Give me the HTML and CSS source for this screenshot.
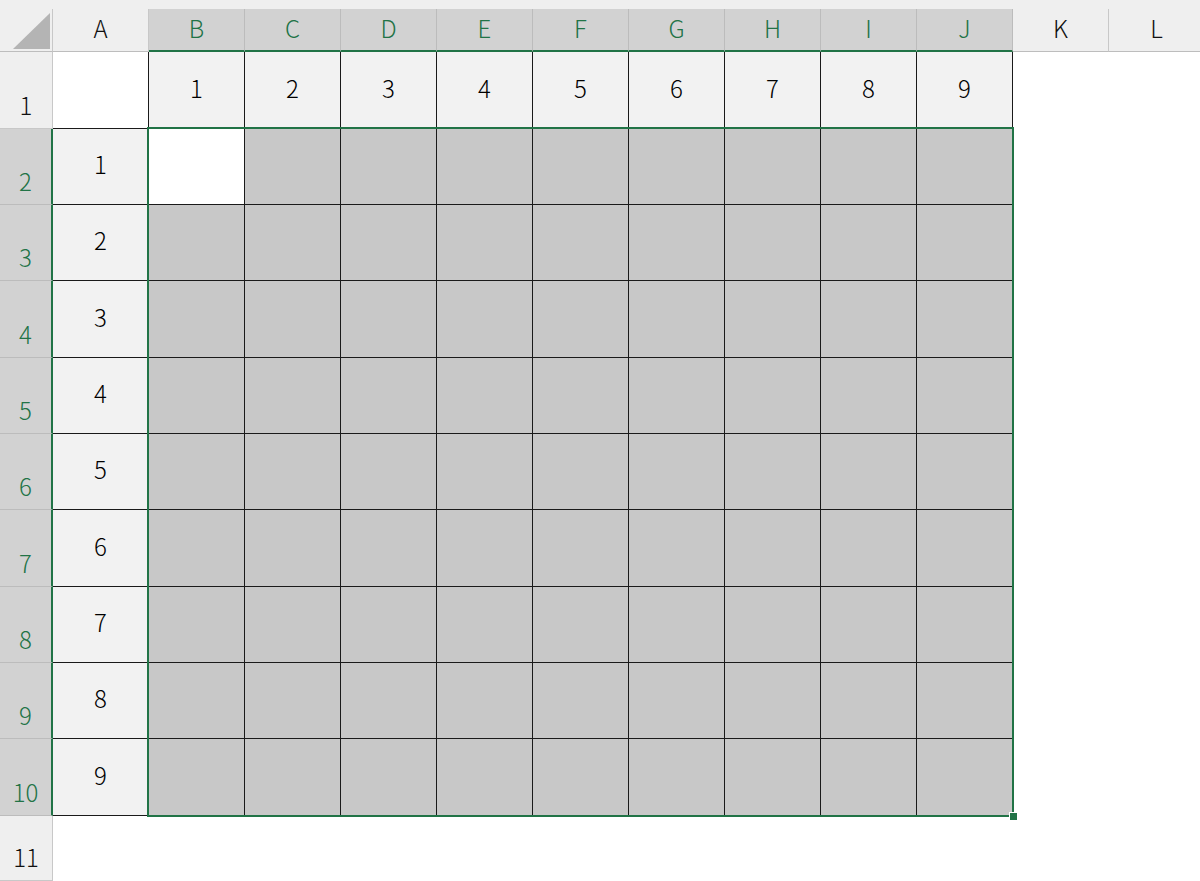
FILE: index.html
```html
<!DOCTYPE html>
<html lang="ja">
<head>
<meta charset="utf-8">
<title>Sheet</title>
<link rel="stylesheet" href="styles.css">
</head>
<body>
<div class="sheet">
  <div class="strip"></div>

  <div class="corner"><svg class="tri" width="52" height="43" viewBox="0 0 52 43"><polygon points="13,40 50,40 50,4" fill="#b4b4b4"/></svg></div>
  <div class="ch">A</div>
  <div class="ch sel">B</div>
  <div class="ch sel">C</div>
  <div class="ch sel">D</div>
  <div class="ch sel">E</div>
  <div class="ch sel">F</div>
  <div class="ch sel">G</div>
  <div class="ch sel">H</div>
  <div class="ch sel">I</div>
  <div class="ch sel">J</div>
  <div class="ch">K</div>
  <div class="ch">L</div>

  <div class="rh">1</div>
  <div class="cell blank"></div>
  <div class="cell light">1</div>
  <div class="cell light">2</div>
  <div class="cell light">3</div>
  <div class="cell light">4</div>
  <div class="cell light">5</div>
  <div class="cell light">6</div>
  <div class="cell light">7</div>
  <div class="cell light">8</div>
  <div class="cell light">9</div>
  <div class="empty"></div>
  <div class="empty"></div>

  <div class="range">
    <div class="rc active"></div><div class="rc"></div><div class="rc"></div><div class="rc"></div><div class="rc"></div><div class="rc"></div><div class="rc"></div><div class="rc"></div><div class="rc"></div>
    <div class="rc"></div><div class="rc"></div><div class="rc"></div><div class="rc"></div><div class="rc"></div><div class="rc"></div><div class="rc"></div><div class="rc"></div><div class="rc"></div>
    <div class="rc"></div><div class="rc"></div><div class="rc"></div><div class="rc"></div><div class="rc"></div><div class="rc"></div><div class="rc"></div><div class="rc"></div><div class="rc"></div>
    <div class="rc"></div><div class="rc"></div><div class="rc"></div><div class="rc"></div><div class="rc"></div><div class="rc"></div><div class="rc"></div><div class="rc"></div><div class="rc"></div>
    <div class="rc"></div><div class="rc"></div><div class="rc"></div><div class="rc"></div><div class="rc"></div><div class="rc"></div><div class="rc"></div><div class="rc"></div><div class="rc"></div>
    <div class="rc"></div><div class="rc"></div><div class="rc"></div><div class="rc"></div><div class="rc"></div><div class="rc"></div><div class="rc"></div><div class="rc"></div><div class="rc"></div>
    <div class="rc"></div><div class="rc"></div><div class="rc"></div><div class="rc"></div><div class="rc"></div><div class="rc"></div><div class="rc"></div><div class="rc"></div><div class="rc"></div>
    <div class="rc"></div><div class="rc"></div><div class="rc"></div><div class="rc"></div><div class="rc"></div><div class="rc"></div><div class="rc"></div><div class="rc"></div><div class="rc"></div>
    <div class="rc"></div><div class="rc"></div><div class="rc"></div><div class="rc"></div><div class="rc"></div><div class="rc"></div><div class="rc"></div><div class="rc"></div><div class="rc"></div>
    <span class="handle"></span>
  </div>

  <div class="rh sel">2</div><div class="cell light">1</div><div class="empty"></div><div class="empty"></div>
  <div class="rh sel">3</div><div class="cell light">2</div><div class="empty"></div><div class="empty"></div>
  <div class="rh sel">4</div><div class="cell light">3</div><div class="empty"></div><div class="empty"></div>
  <div class="rh sel">5</div><div class="cell light">4</div><div class="empty"></div><div class="empty"></div>
  <div class="rh sel">6</div><div class="cell light">5</div><div class="empty"></div><div class="empty"></div>
  <div class="rh sel">7</div><div class="cell light">6</div><div class="empty"></div><div class="empty"></div>
  <div class="rh sel">8</div><div class="cell light">7</div><div class="empty"></div><div class="empty"></div>
  <div class="rh sel">9</div><div class="cell light">8</div><div class="empty"></div><div class="empty"></div>
  <div class="rh sel">10</div><div class="cell light">9</div><div class="empty"></div><div class="empty"></div>

  <div class="rh">11</div>
</div>
</body>
</html>
```

FILE: styles.css
```css
* { box-sizing: border-box; }
html, body { margin: 0; padding: 0; background: #ffffff; }
body {
  font-family: "Noto Sans CJK JP", "Noto Sans", sans-serif;
  font-size: 24px;
  font-weight: 300;
  color: #000000;
  overflow: hidden;
}
.sheet {
  display: grid;
  width: 1200px;
  height: 881px;
  overflow: hidden;
  grid-template-columns: 53px repeat(12, 96px);
  grid-template-rows: 9px 43px 77px 76px 76px 77px 76px 76px 77px 76px 76px 77px 65px 1fr;
}
.strip {
  grid-column: 1 / -1;
  background: #efefef;
}
.corner {
  background: #efefef;
  border-right: 1px solid #c8c8c8;
  border-bottom: 1px solid #bdbdbd;
}
.tri { display: block; }
.ch {
  background: #efefef;
  border-right: 1px solid #c8c8c8;
  border-bottom: 1px solid #bdbdbd;
  display: flex;
  align-items: center;
  justify-content: center;
  line-height: 1;
  padding-bottom: 4px;
  color: #111111;
}
.ch.sel {
  background: #d2d2d2;
  color: #217346;
  border-right-color: #bcbcbc;
  border-bottom: 2px solid #217346;
  padding-bottom: 3px;
}
.rh {
  background: #efefef;
  border-right: 1px solid #c8c8c8;
  border-bottom: 1px solid #c8c8c8;
  display: flex;
  align-items: flex-end;
  justify-content: center;
  line-height: 1;
  padding-bottom: 11px;
  color: #111111;
}
.rh.sel {
  background: #d2d2d2;
  color: #217346;
  border-right: 2px solid #217346;
  border-bottom-color: #bcbcbc;
}
.cell {
  border-right: 1px solid #1a1a1a;
  border-bottom: 1px solid #1a1a1a;
  display: flex;
  align-items: center;
  justify-content: center;
  line-height: 1;
  padding-bottom: 5px;
}
.cell.blank { background: #ffffff; }
.cell.light { background: #f2f2f2; }
.empty { background: #ffffff; }
.range {
  grid-column: 3 / 12;
  grid-row: 4 / 13;
  display: grid;
  grid-template-columns: repeat(9, 96px);
  grid-template-rows: 76px 76px 77px 76px 76px 77px 76px 76px 77px;
  position: relative;
}
.rc {
  background: #c8c8c8;
  border-right: 1px solid #1a1a1a;
  border-bottom: 1px solid #1a1a1a;
}
.rc.active { background: #ffffff; }
.range::after {
  content: "";
  position: absolute;
  left: -2px;
  top: -2px;
  right: -1px;
  bottom: -1px;
  border: 2px solid #217346;
  pointer-events: none;
}
.handle {
  position: absolute;
  right: -4px;
  bottom: -4px;
  width: 7px;
  height: 7px;
  background: #217346;
  outline: 1px solid #ffffff;
  z-index: 2;
}
```
